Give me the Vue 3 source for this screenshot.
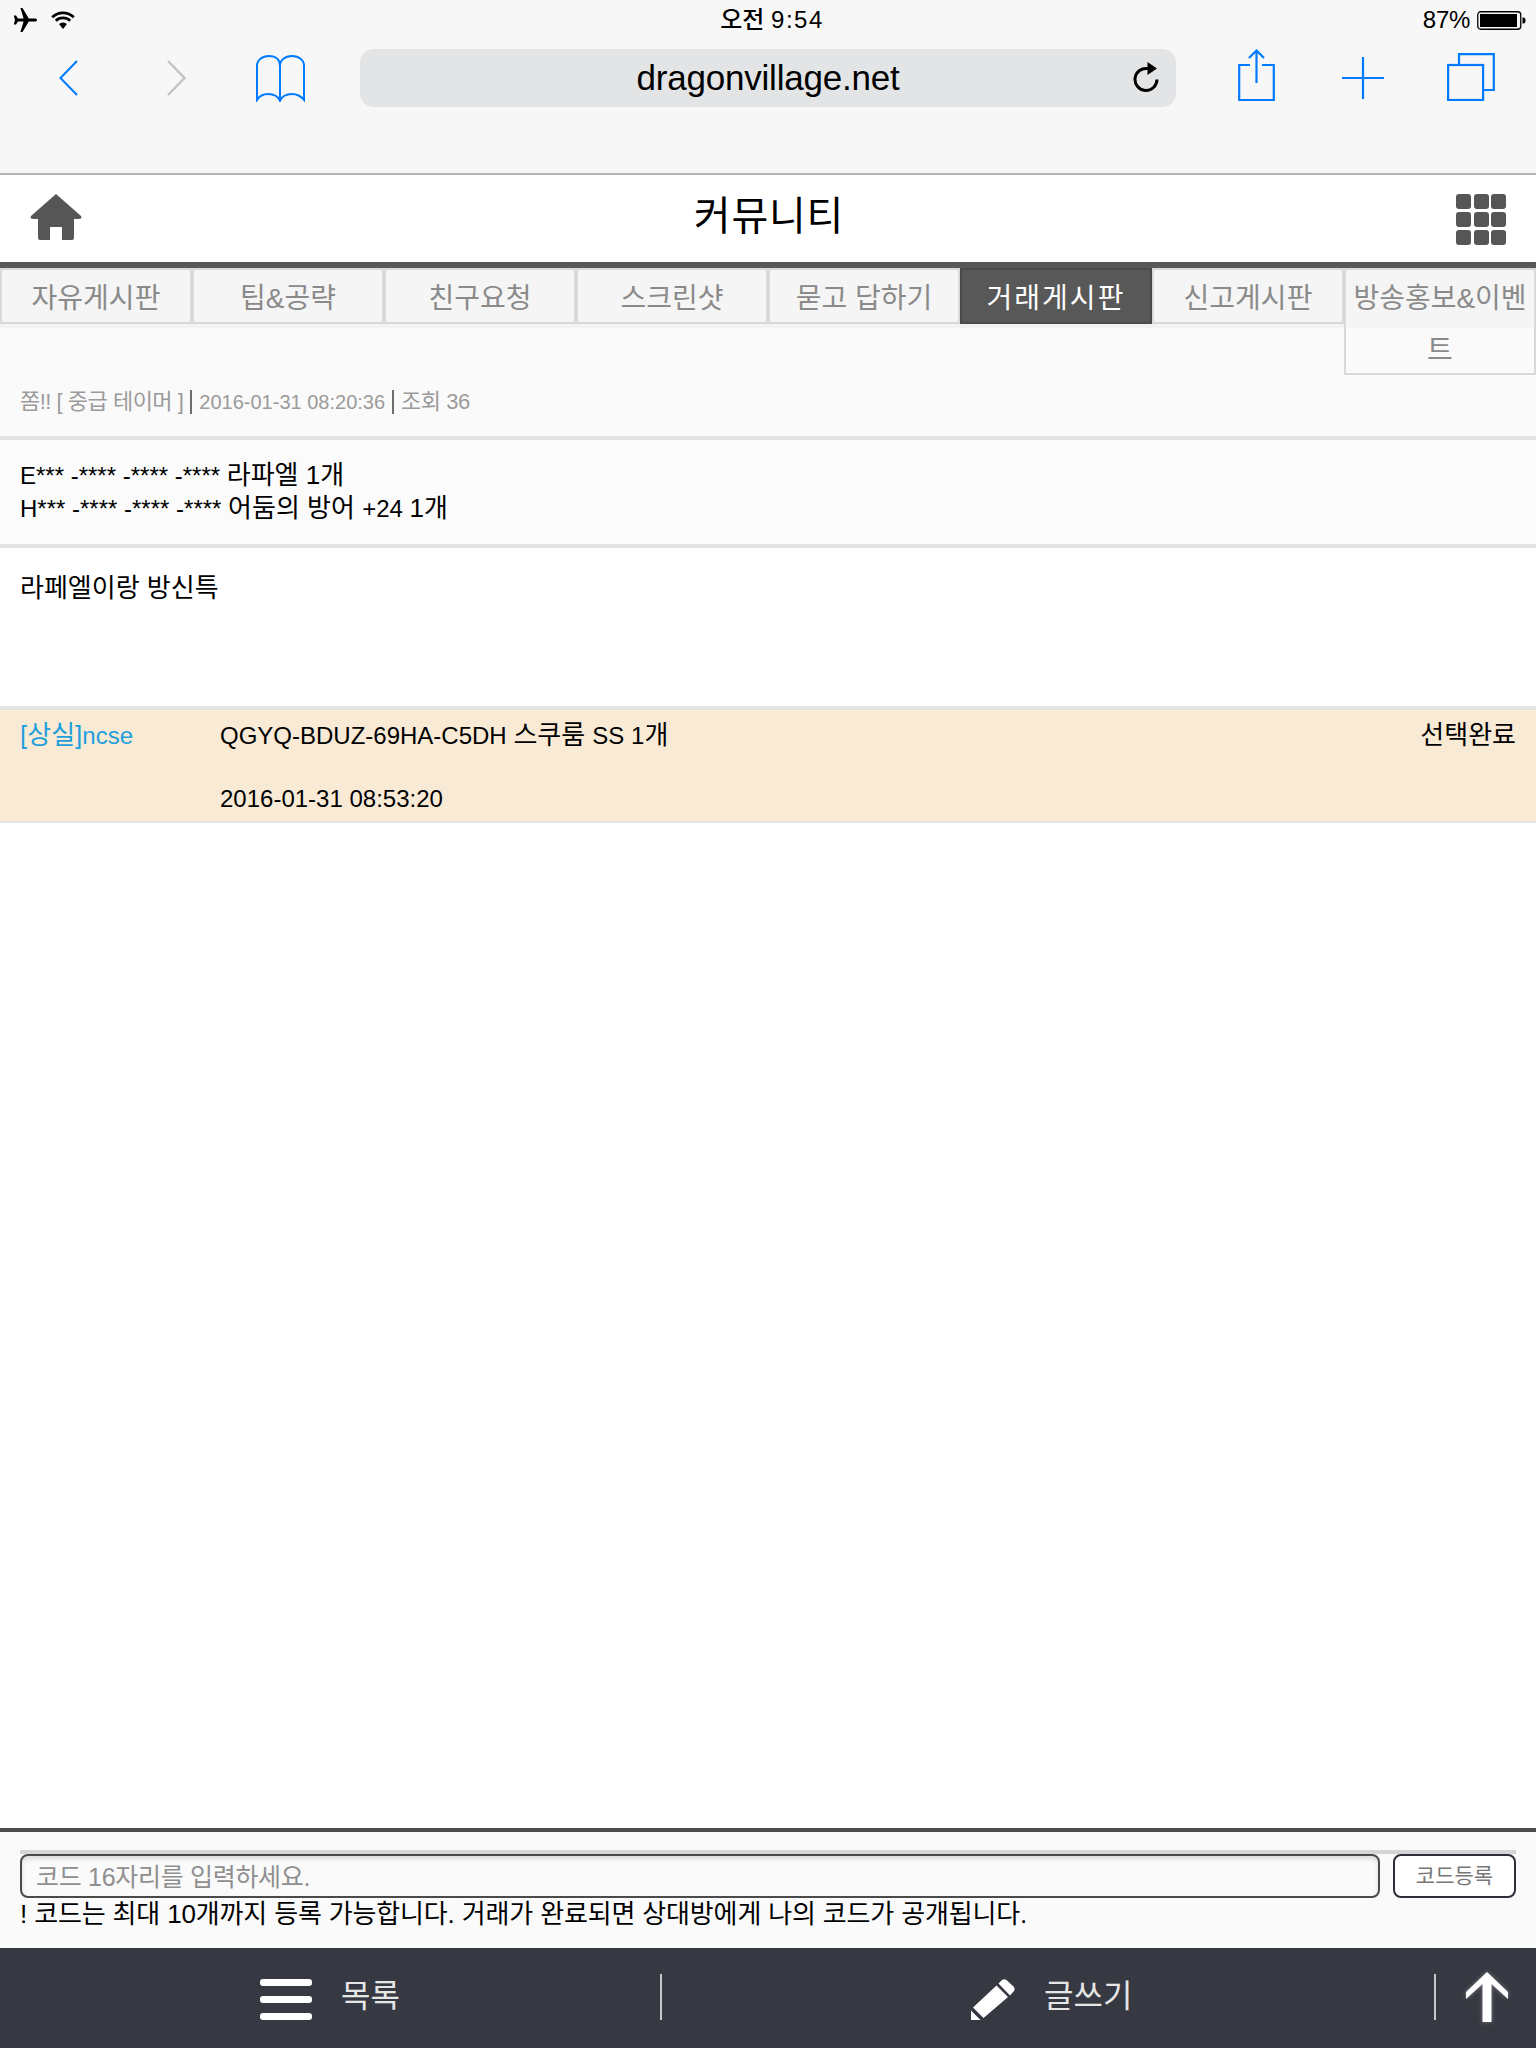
<script setup>
const tabs = [
  { name: '자유게시판' },
  { name: '팁&공략' },
  { name: '친구요청' },
  { name: '스크린샷' },
  { name: '묻고 답하기' },
  { name: '거래게시판', active: true },
  { name: '신고게시판' },
  { name: '방송홍보&이벤트', wrap: true },
]
</script>

<template>
  <div class="page">
    <header class="chrome">
      <div class="status">
        <div class="status-left">
          <svg class="plane" viewBox="0 0 24 24"><path d="M24 12c0-1-1-1.600-2.200-1.600h-6L9.500 0H7.400l3.200 10.400H5L3 7.600H.8L2 12 .8 16.400H3l2-2.800h5.600L7.400 24h2.100l6.300-10.400h6c1.200 0 2.200-.6 2.200-1.600z"/></svg>
          <svg class="wifi" viewBox="0 0 24 18"><path d="M1.200 6.200a15.500 15.500 0 0 1 21.600 0M4.800 9.800a10.500 10.500 0 0 1 14.400 0" fill="none" stroke="#000" stroke-width="2.800"/><path d="M8 13a6 6 0 0 1 8 0l-4 5z"/></svg>
        </div>
        <div class="clock">오전 <span class="clock-time">9:54</span></div>
        <div class="status-right">
          <span class="pct">87%</span>
          <svg class="battery" viewBox="0 0 49 19"><rect x=".75" y=".75" width="43" height="17.500" rx="3" fill="none" stroke="#000" stroke-width="1.300"/><rect x="3" y="3" width="37" height="13" fill="#000"/><path d="M45.500 6.500h1q2 0 2 3t-2 3h-1z"/></svg>
        </div>
      </div>
      <div class="toolbar">
        <svg class="ic back" viewBox="0 0 19 36"><path d="M18 1 1.500 18 18 35" fill="none" stroke="#007aff" stroke-width="2"/></svg>
        <svg class="ic forward" viewBox="0 0 19 36"><path d="M1 1l16.500 17L1 35" fill="none" stroke="#c4c4c6" stroke-width="2.400"/></svg>
        <svg class="ic book" viewBox="0 0 49 47"><path d="M24 46V11C24 5 20 1 13 1 6 1 1 5 1 11v34c3-5 7-6 11-6 6 0 10 2 12 7 2-5 6-7 12-7 4 0 8 1 12 6V11c0-6-5-10-12-10-7 0-12 4-12 10" fill="none" stroke="#007aff" stroke-width="2"/></svg>
        <div class="url">
          <span class="url-text">dragonvillage.net</span>
          <svg class="reload" viewBox="0 0 26 30"><path d="M15 6.600A11 11 0 1 0 24 17.500" fill="none" stroke="#000" stroke-width="3"/><path d="M14.500 0 24 6.500 14.500 13z"/></svg>
        </div>
        <svg class="ic share" viewBox="0 0 37 52"><path d="M12 16H1.200v35h34.600V16H24M18.500 34V2M11 9l7.500-7.500L26 9" fill="none" stroke="#007aff" stroke-width="2.200"/></svg>
        <svg class="ic plus" viewBox="0 0 42 42"><path d="M21 0v42M0 21h42" stroke="#007aff" stroke-width="2.200"/></svg>
        <svg class="ic pages" viewBox="0 0 48 48"><path d="M12 11V1.200h34.800V37H37" fill="none" stroke="#007aff" stroke-width="2.200"/><rect x="1.100" y="12" width="35" height="35" fill="none" stroke="#007aff" stroke-width="2.200"/></svg>
      </div>
    </header>

    <div class="titlebar">
      <svg class="home" viewBox="0 0 52 46"><path d="M26 0l25 22q1.500 3-2 3h-5v19q0 2-2 2H32V33H20v13H10q-2 0-2-2V25H3q-3.500 0-2-3z" fill="#565656"/></svg>
      <h1 class="title">커뮤니티</h1>
      <div class="apps"><i v-for="n in 9" :key="n"></i></div>
    </div>

    <nav class="tabs">
      <a v-for="t in tabs" :key="t.name" class="tab" :class="{ active: t.active, wrap: t.wrap }">{{ t.name }}</a>
    </nav>

    <section class="meta">
      <span class="ko-s">쫌!! [ 중급 테이머 ]</span><span class="pipe"></span><span>2016-01-31 08:20:36</span><span class="pipe"></span><span class="ko-s">조회 36</span>
    </section>

    <section class="codes">
      <div>E*** -**** -**** -**** <span class="ko">라파엘 1개</span></div>
      <div>H*** -**** -**** -**** <span class="ko">어둠의 방어 </span>+24 <span class="ko">1개</span></div>
    </section>

    <section class="body"><span class="ko">라페엘이랑 방신특</span></section>

    <section class="reply">
      <div class="who"><span class="ko">[상실]</span>ncse</div>
      <div class="what">
        <div>QGYQ-BDUZ-69HA-C5DH <span class="ko">스쿠룸 </span>SS 1<span class="ko">개</span></div>
        <div class="when">2016-01-31 08:53:20</div>
      </div>
      <div class="state"><span class="ko">선택완료</span></div>
    </section>

    <div class="spacer"></div>

    <section class="form">
      <div class="form-row">
        <div class="input">코드 16자리를 입력하세요.</div>
        <div class="submit">코드등록</div>
      </div>
      <p class="notice">! 코드는 최대 10개까지 등록 가능합니다. 거래가 완료되면 상대방에게 나의 코드가 공개됩니다.</p>
    </section>

    <footer class="bottom">
      <div class="cell list">
        <div class="burger"><i></i><i></i><i></i></div>
        <span class="label">목록</span>
      </div>
      <div class="cell write">
        <svg class="pencil" viewBox="0 0 44 41"><path d="M27.500 4.500 31 1q2-1.500 4.500 0L42.500 7.500q2 2 .5 4.500L39 16.500zM25.500 6.500 37 18 12.500 39 2 28.500zM0 31.500 9.500 41H0z" fill="#fff"/></svg>
        <span class="label">글쓰기</span>
      </div>
      <div class="cell top">
        <svg class="arrow" viewBox="0 0 42 50"><path d="M21 0 42 20v7L25.500 12v38h-9V12L0 27v-7z" fill="#fff"/></svg>
      </div>
    </footer>
  </div>
</template>

<style scoped>
.page {
  width: 1536px;
  height: 2048px;
  display: flex;
  flex-direction: column;
  background: #fff;
  color: #000;
  font-family: "Liberation Sans", "Noto Sans CJK KR", sans-serif;
  font-size: 24px;
  overflow: hidden;
}
.ko { font-size: 26px; }
.ko-s { font-size: 22px; letter-spacing: -0.5px; }

.chrome {
  height: 175px;
  flex: none;
  box-sizing: border-box;
  background: #f7f7f7;
  border-bottom: 2px solid #b4b4b4;
}
.status {
  height: 49px;
  display: grid;
  grid-template-columns: 1fr auto 1fr;
  align-items: start;
}
.status-left { display: flex; gap: 14px; padding: 8px 0 0 13px; }
.plane { width: 24px; height: 24px; }
.wifi { width: 24px; height: 18px; margin-top: 3px; }
.clock { font-size: 24px; line-height: 40px; font-weight: 500; padding-left: 8px; }
.clock-time { letter-spacing: 1.500px; }
.status-right { display: flex; justify-content: flex-end; padding: 8px 10px 0 0; gap: 7px; }
.pct { font-size: 24px; line-height: 24px; letter-spacing: -0.3px; }
.battery { width: 49px; height: 19px; margin-top: 3px; }

.toolbar { height: 58px; display: flex; align-items: center; }
.ic { flex: none; }
.back { width: 19px; height: 36px; margin-left: 59px; }
.forward { width: 19px; height: 36px; margin-left: 89px; }
.book { width: 49px; height: 47px; margin-left: 70px; }
.url {
  width: 816px;
  height: 58px;
  margin-left: 55px;
  flex: none;
  position: relative;
  display: flex;
  align-items: center;
  justify-content: center;
  background: #e3e4e6;
  border-radius: 14px;
}
.url-text { font-size: 35px; letter-spacing: -0.2px; color: #000; }
.reload { position: absolute; right: 17px; top: 13px; width: 26px; height: 30px; }
.share { width: 37px; height: 52px; margin-left: 62px; margin-top: -6px; }
.plus { width: 42px; height: 42px; margin-left: 67px; }
.pages { width: 48px; height: 48px; margin-left: 63px; margin-top: -2px; }

.titlebar {
  height: 87px;
  flex: none;
  display: flex;
  align-items: center;
  justify-content: space-between;
  padding: 0 30px;
  position: relative;
  background: #fff;
}
.home { width: 52px; height: 46px; margin-top: -3px; }
.title {
  position: absolute;
  left: 2px;
  right: 0;
  top: -2px;
  text-align: center;
  margin: 0;
  font-size: 40px;
  font-weight: 400;
  letter-spacing: 0.800px;
  line-height: 87px;
}
.apps {
  width: 50px;
  height: 51px;
  margin-top: 2px;
  display: grid;
  grid-template-columns: repeat(3, 15px);
  grid-template-rows: repeat(3, 15px);
  gap: 3px 2.500px;
}
.apps i { background: #565656; border-radius: 3px; display: block; }

.tabs {
  height: 60px;
  flex: none;
  display: flex;
  align-items: flex-start;
  background: #f2f2f2;
  border-top: 6px solid #585858;
  position: relative;
  z-index: 1;
}
.tab {
  width: 192px;
  height: 56px;
  flex: none;
  box-sizing: border-box;
  border: 2px solid #d8d8d8;
  background: #f5f5f5;
  color: #8a8a8a;
  font-size: 28px;
  line-height: 52px;
  padding-top: 3px;
  text-align: center;
}
.tab.active { background: #585858; border-color: #4a4a4a; color: #fff; letter-spacing: 2px; }
.tab.wrap {
  height: 107px;
  background: linear-gradient(#f5f5f5 58px, #fafafa 58px);
}

.meta {
  height: 112px;
  flex: none;
  box-sizing: border-box;
  background: #fafafa;
  border-bottom: 4px solid #e3e3e3;
  padding: 0 0 22px 20px;
  display: flex;
  align-items: flex-end;
  color: #9a9a9a;
  font-size: 20px;
  line-height: 24px;
}
.pipe { width: 2px; height: 24px; background: #6d6d6d; margin: 0 7px; }

.codes {
  height: 108px;
  flex: none;
  box-sizing: border-box;
  background: #fbfbfb;
  border-bottom: 4px solid #e3e3e3;
  padding: 19px 20px 0;
  line-height: 32px;
}
.body {
  height: 162px;
  flex: none;
  box-sizing: border-box;
  background: #fff;
  border-bottom: 4px solid #e3e3e3;
  padding: 23px 20px 0;
  line-height: 34px;
}
.reply {
  height: 113px;
  flex: none;
  box-sizing: border-box;
  background: #f9ead6;
  border-bottom: 2px solid #e3e3e3;
  display: flex;
  padding: 8px 20px 0;
  line-height: 34px;
}
.who { width: 200px; color: #1e9fdc; flex: none; }
.what { flex: 1; }
.when { margin-top: 29px; }
.state { flex: none; }

.spacer { flex: 1; }

.form {
  height: 120px;
  flex: none;
  box-sizing: border-box;
  background: #fafafa;
  border-top: 4px solid #4d4d4d;
  padding: 18px 20px 0;
}
.form-row {
  display: flex;
  gap: 13px;
  border-top: 4px solid #d5d5d5;
}
.input {
  flex: 1;
  height: 44px;
  box-sizing: border-box;
  border: 2px solid #4a4a4a;
  border-radius: 8px;
  box-shadow: inset 0 3px 4px #dcdcdc;
  padding: 0 14px;
  line-height: 42px;
  color: #8f8f8f;
  font-size: 25px;
  letter-spacing: -0.3px;
  background: #fafafa;
}
.submit {
  width: 123px;
  height: 44px;
  flex: none;
  box-sizing: border-box;
  border: 2px solid #2c2f38;
  border-radius: 8px;
  background: #fff;
  color: #777;
  font-size: 21px;
  line-height: 40px;
  text-align: center;
}
.notice { margin: 0; font-size: 26px; line-height: 32px; letter-spacing: -0.15px; color: #000; }

.bottom {
  height: 100px;
  flex: none;
  background: #373942;
  display: grid;
  grid-template-columns: 662px 774px 100px;
  color: #e6e6e6;
  font-size: 32px;
}
.cell { position: relative; display: flex; align-items: center; }
.list::after, .write::after {
  content: "";
  position: absolute;
  right: 0;
  top: 26px;
  width: 2px;
  height: 46px;
  background: #c8c8c8;
}
.label { margin-bottom: 10px; }
.list { padding-left: 260px; gap: 29px; }
.write { padding-left: 309px; gap: 29px; }
.burger { width: 52px; display: flex; flex-direction: column; gap: 10px; margin-top: 3px; }
.burger i { display: block; height: 7px; background: #fff; border-radius: 3px; }
.pencil { width: 44px; height: 41px; margin-top: 3px; }
.top { padding-left: 30px; }
.arrow { width: 42px; height: 50px; margin-top: -2px; filter: drop-shadow(0 0 2px rgba(255,255,255,.35)); }
</style>

<style>
body { margin: 0; background: #fff; }
</style>
